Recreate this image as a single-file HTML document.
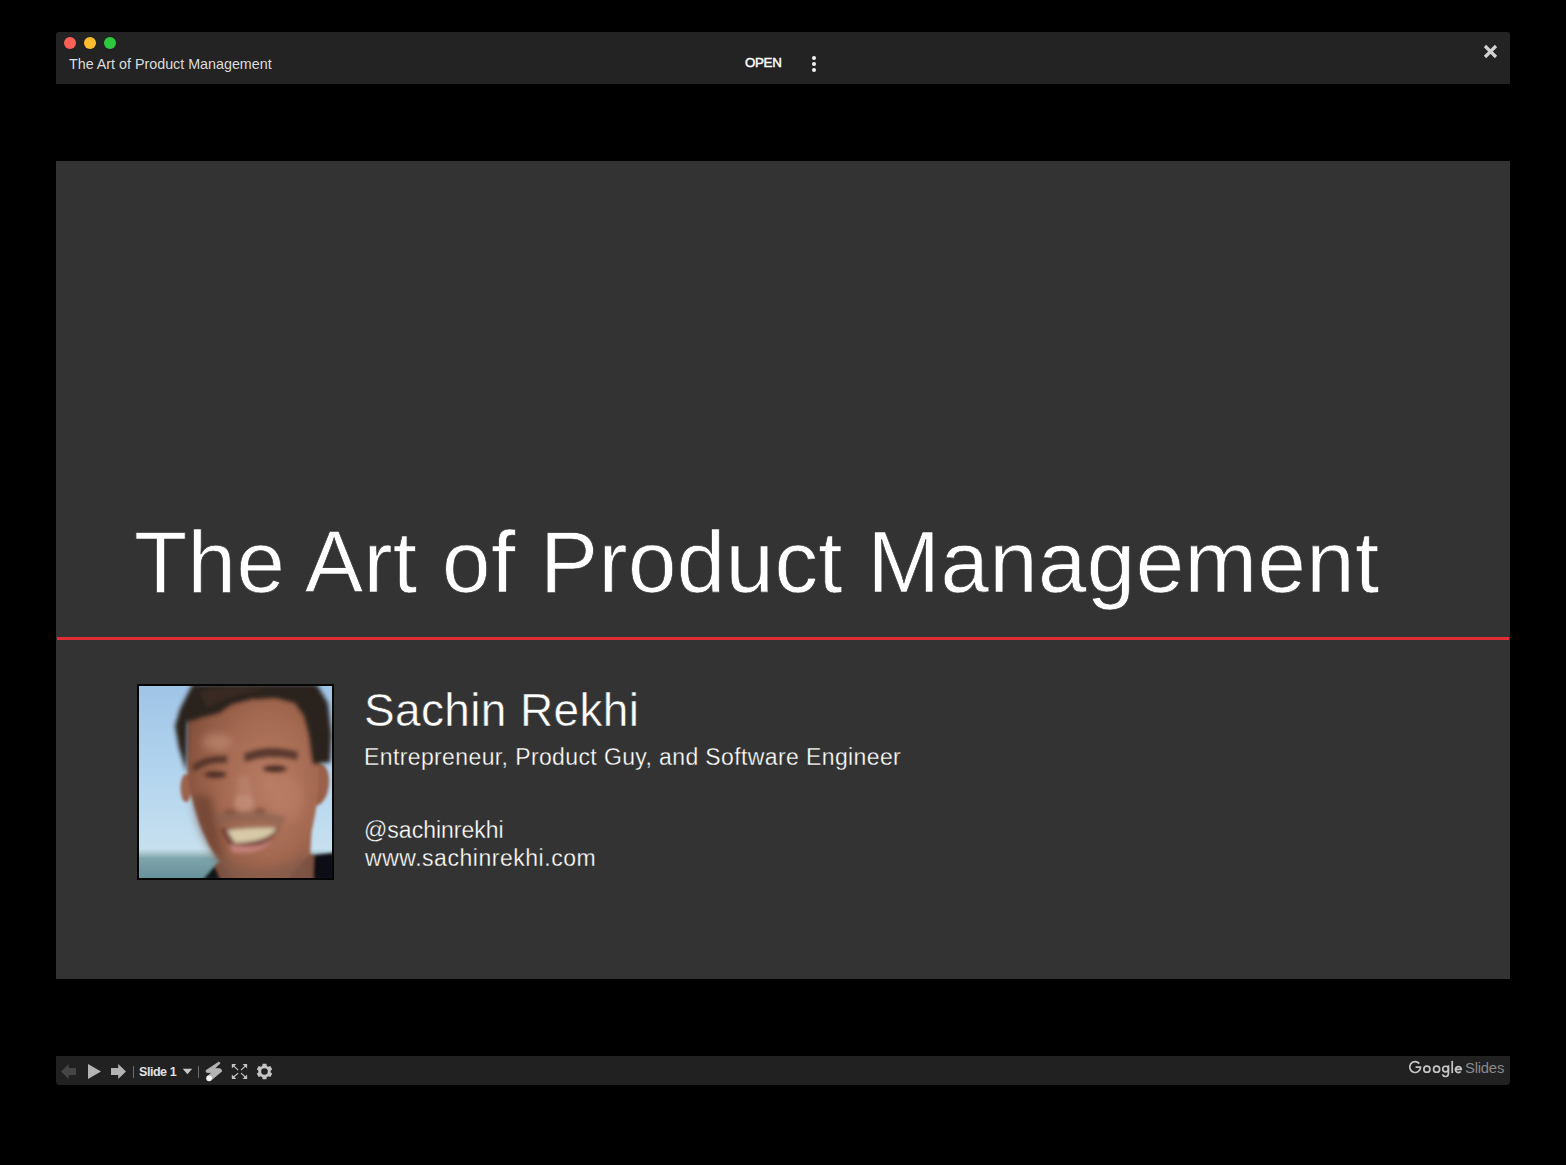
<!DOCTYPE html>
<html>
<head>
<meta charset="utf-8">
<style>
html,body{margin:0;padding:0;}
body{width:1566px;height:1165px;background:#000;position:relative;overflow:hidden;font-family:"Liberation Sans",sans-serif;}
.abs{position:absolute;}
#titlebar{left:56px;top:32px;width:1454px;height:52px;background:#232323;border-radius:3px 3px 0 0;}
.dot{position:absolute;top:37px;width:12px;height:12px;border-radius:50%;}
#ttl{left:69px;top:56px;font-size:14.3px;color:#dcdcdc;white-space:nowrap;line-height:17px;}
#open{left:745px;top:54px;font-size:13.3px;font-weight:normal;-webkit-text-stroke:0.45px #fff;letter-spacing:-0.3px;color:#fff;line-height:17px;}
.kd{position:absolute;left:811.5px;width:4px;height:4px;border-radius:50%;background:#f2f2f2;}
#slide{left:56px;top:161px;width:1454px;height:818px;background:#333333;}
#redline{left:57px;top:637px;width:1452px;height:3px;background:#e12d36;}
.t{position:absolute;white-space:nowrap;color:#fff;}
#title{left:134px;font-size:87px;line-height:100px;top:0;letter-spacing:0.43px;-webkit-text-stroke:0.7px #333;}
#name{font-size:46px;line-height:54px;letter-spacing:0.36px;-webkit-text-stroke:0.5px #333;}
.sm{font-size:23px;line-height:28px;-webkit-text-stroke:0.3px #333;}
#photo{left:137px;top:684px;width:197px;height:196px;background:#000;}
#toolbar{left:56px;top:1056px;width:1454px;height:29px;background:#212121;border-radius:0 0 4px 4px;}
</style>
</head>
<body>
<div id="titlebar" class="abs"></div>
<div class="dot" style="left:64px;background:#fe5f57;"></div>
<div class="dot" style="left:84px;background:#febc2e;"></div>
<div class="dot" style="left:104px;background:#2ec83f;"></div>
<div id="ttl" class="abs">The Art of Product Management</div>
<div id="open" class="abs">OPEN</div>
<div class="kd" style="top:55.5px"></div>
<div class="kd" style="top:62px"></div>
<div class="kd" style="top:68.4px"></div>
<svg class="abs" style="left:1480px;top:41px" width="21" height="21" viewBox="0 0 21 21"><path d="M5 5 L16 16 M16 5 L5 16" stroke="#d2d2d2" stroke-width="3.2"/></svg>

<div id="slide" class="abs"></div>
<div id="redline" class="abs"></div>
<div id="title" class="t" style="top:512px">The Art of Product Management</div>
<div id="name" class="t" style="left:364px;top:683px">Sachin Rekhi</div>
<div class="t sm" style="left:364px;top:743px;letter-spacing:0.385px">Entrepreneur, Product Guy, and Software Engineer</div>
<div class="t sm" style="left:364px;top:815.5px">@sachinrekhi</div>
<div class="t sm" style="left:365px;top:843.8px;letter-spacing:0.53px">www.sachinrekhi.com</div>
<svg class="abs" style="left:137px;top:684px" width="197" height="196" viewBox="0 0 197 196">
<defs>
<linearGradient id="sky" x1="0" y1="0" x2="0" y2="1">
<stop offset="0" stop-color="#9fc4e6"/>
<stop offset="0.45" stop-color="#b2d4ee"/>
<stop offset="0.84" stop-color="#c7e0ef"/>
<stop offset="0.865" stop-color="#a8c4cc"/>
<stop offset="0.89" stop-color="#7ea4ac"/>
<stop offset="1" stop-color="#668f97"/>
</linearGradient>
<radialGradient id="skin" cx="0.62" cy="0.5" r="0.65">
<stop offset="0" stop-color="#b87c64"/>
<stop offset="0.55" stop-color="#a56a52"/>
<stop offset="1" stop-color="#86523e"/>
</radialGradient>
<filter id="bl" x="-10%" y="-10%" width="120%" height="120%"><feGaussianBlur stdDeviation="1.5"/></filter><filter id="bl3" x="-10%" y="-10%" width="120%" height="120%"><feGaussianBlur stdDeviation="2"/></filter>
<filter id="bl2" x="-30%" y="-30%" width="160%" height="160%"><feGaussianBlur stdDeviation="4"/></filter>
<clipPath id="pc"><rect x="2" y="2" width="193" height="192"/></clipPath>
</defs>
<rect x="0" y="0" width="197" height="196" fill="#050505"/>
<g clip-path="url(#pc)">
<rect x="0" y="0" width="197" height="196" fill="url(#sky)"/>
<g filter="url(#bl)">
<path d="M70 196 L80 179 L177 170 L178 196 Z" fill="#7e5040"/>
<path d="M177 171 L197 169 L197 196 L176 196 Z" fill="#0a0d12"/>
<path d="M66 196 L78 182 L84 196 Z" fill="#101318"/>
<ellipse cx="49" cy="104" rx="5.5" ry="14" fill="#9c6450"/>
<path d="M176 80 C186 76 193 84 192 100 C191 112 186 120 179 122 Z" fill="#9a604a"/>
<path d="M50.6 38 C50 60 50 85 51 98 C54 112 58 125 60 131 C63 141 66 148 68.5 153 C72 161 75 167 79 172 C83 178 87 184 92 188 C95 191 97 194 99 196 L150 196 C158 186 167 176 173.2 170 C174 160 174 155 174.5 148.6 C177 135 179 128 179.5 120.8 C181 110 183 90 182 60 C180 30 175 10 160 6 C130 4 100 4 70 8 C58 14 52 26 50.6 38 Z" fill="url(#skin)"/>
</g>
<g filter="url(#bl2)">
<path d="M56 110 C58 135 66 160 90 186 C84 160 78 135 74 112 Z" fill="#6a3e2e" opacity="0.7"/>
<ellipse cx="80" cy="58" rx="14" ry="8" fill="#c8967e" opacity="0.55"/>
<ellipse cx="150" cy="115" rx="16" ry="22" fill="#bd8068" opacity="0.5"/>
<path d="M82 168 C100 190 140 192 168 168 L172 196 L85 196 Z" fill="#7c5a4c" opacity="0.55"/>
</g>
<g filter="url(#bl3)">
<path d="M55.6 0 L179.5 0 L191 19 L194.7 50.6 L193.4 78.4 L176 80 L172 50.6 L166.9 31.6 L158 19 L139 13.9 L113.8 15.2 L94.8 20.2 L82.2 29 L65.7 32.9 L50.6 38 L49.3 88.5 L41.7 63 L38 42 L43 25 Z" fill="#2c201a"/>
<path d="M62 8 C80 2 110 2 130 6 C110 8 90 14 70 24 Z" fill="#4a3c34" opacity="0.4"/>
<path d="M55 81 C65 74 78 71 90 72 L90 79 C78 78 66 81 57 88 Z" fill="#4a3026" opacity="0.85"/>
<path d="M107 70 C120 64 138 61 161 68 L160 76 C140 71 122 73 108 78 Z" fill="#4a3026" opacity="0.85"/>
<ellipse cx="78.4" cy="90.6" rx="11" ry="3.2" fill="#4a2a22"/>
<ellipse cx="137.8" cy="84.8" rx="12" ry="3.2" fill="#4a2a22"/>
<path d="M101 92 C100 102 99 110 98 116 L116 116 C115 108 113 100 112 92 Z" fill="#c4907c" opacity="0.35"/>
<ellipse cx="107" cy="119" rx="10" ry="8" fill="#cc9a86" opacity="0.55"/>
<ellipse cx="93" cy="128" rx="6" ry="3.5" fill="#6e4234" opacity="0.5"/>
<ellipse cx="123" cy="127" rx="6" ry="3.5" fill="#6e4234" opacity="0.5"/>
<path d="M76 132 C95 126 130 126 148 133 L146 141 C125 137 100 137 80 142 Z" fill="#7a5a4c" opacity="0.45"/>
<path d="M83 145 C105 142 128 141 143 143 C136 158 115 168 98 168 C92 160 87 152 83 145 Z" fill="#6e3a34"/>
<path d="M90 146 C105 144 126 143 140 144 C134 153 122 158 98 159 C95 155 92 150 90 146 Z" fill="#d8caa8"/>
<path d="M93 160 C108 164 126 162 134 156 C130 167 108 171 95 168 Z" fill="#c4827a"/>
</g>
</g>
</svg>

<div id="toolbar" class="abs"></div>
<svg class="abs" style="left:0;top:1050px" width="1566" height="40" viewBox="0 1050 1566 40">
<path d="M61 1071.5 L68.8 1064 L68.8 1068 L76 1068 L76 1075 L68.8 1075 L68.8 1079 Z" fill="#454545"/>
<path d="M88 1064 L101 1071.5 L88 1079 Z" fill="#b4b4b4"/>
<path d="M126 1071.5 L118.2 1064 L118.2 1068 L111 1068 L111 1075 L118.2 1075 L118.2 1079 Z" fill="#b4b4b4"/>
<rect x="133" y="1066" width="1" height="12" fill="#6a6a6a"/>
<text x="139" y="1076" font-family="Liberation Sans" font-weight="bold" font-size="12.5" fill="#e0e0e0" letter-spacing="-0.45">Slide 1</text>
<path d="M182.7 1068.8 L192.2 1068.8 L187.45 1074.2 Z" fill="#c8c8c8"/>
<rect x="198" y="1066" width="1" height="12" fill="#6a6a6a"/>
<path d="M218.8 1062.0 L220.2 1063.2 L214.8 1068.2 L220.7 1068.9 L221.8 1071.2 L212.2 1079.3 L206.7 1076.9 L211.5 1073.1 L206.3 1072.2 L206.0 1070.5 Z" fill="#b4b4b4" stroke="#b4b4b4" stroke-width="0.8" stroke-linejoin="round"/>
<circle cx="209.1" cy="1078.3" r="2.9" fill="#f4f4f4"/>
<g fill="#c4c4c4">
<path d="M231.8 1063.9 L236.3 1063.9 L231.8 1068.4 Z"/>
<path d="M247.1 1063.9 L242.6 1063.9 L247.1 1068.4 Z"/>
<path d="M231.8 1079 L236.3 1079 L231.8 1074.5 Z"/>
<path d="M247.1 1079 L242.6 1079 L247.1 1074.5 Z"/>
</g>
<g stroke="#c4c4c4" stroke-width="1.2">
<path d="M232.7 1065.1 L238.2 1070.1 M246.2 1065.1 L241 1070.1 M232.7 1077.8 L238.2 1073.1 M246.2 1077.8 L241 1073.1"/>
</g>
<g transform="translate(264.5 1071.5)">
<path fill="#c4c4c4" fill-rule="evenodd" d="M-1.9 -7.7 L1.9 -7.7 L2.3 -5.6 A6 6 0 0 1 3.8 -4.7 L5.8 -5.5 L7.7 -2.2 L6.1 -0.8 A6 6 0 0 1 6.1 0.8 L7.7 2.2 L5.8 5.5 L3.8 4.7 A6 6 0 0 1 2.3 5.6 L1.9 7.7 L-1.9 7.7 L-2.3 5.6 A6 6 0 0 1 -3.8 4.7 L-5.8 5.5 L-7.7 2.2 L-6.1 0.8 A6 6 0 0 1 -6.1 -0.8 L-7.7 -2.2 L-5.8 -5.5 L-3.8 -4.7 A6 6 0 0 1 -2.3 -5.6 Z M3.3 0 A3.3 3.3 0 1 0 -3.3 0 A3.3 3.3 0 1 0 3.3 0 Z"/>
</g>
<g fill="none" stroke="#c6c6c6" stroke-width="1.7">
<path d="M1419.3 1063.6 A5.4 5.4 0 1 0 1420.55 1067.1 M1415.6 1067.1 L1421.3 1067.1"/>
<circle cx="1426.9" cy="1069.2" r="3.05"/>
<circle cx="1436.6" cy="1069.2" r="3.05"/>
<circle cx="1445.6" cy="1069.1" r="2.85"/>
<path d="M1448.4 1065.2 L1448.4 1073.4 C1448.4 1077.3 1443.8 1077.4 1442.4 1074.3"/>
<path d="M1452.2 1060.9 L1452.2 1073.1"/>
<path d="M1455.7 1069.3 L1461.3 1069.3 A2.95 2.95 0 1 0 1460.7 1071.4"/>
</g>
<text x="1465" y="1072.8" font-family="Liberation Sans" font-size="14.8" fill="#8a8a8a" letter-spacing="-0.2">Slides</text>
</svg>
</body>
</html>
